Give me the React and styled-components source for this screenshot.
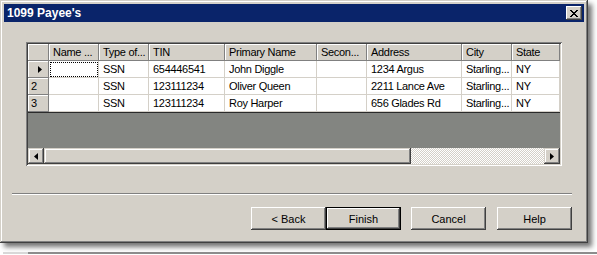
import React from "react";
import styled, { createGlobalStyle } from "styled-components";

const GlobalStyle = createGlobalStyle`
  html, body {
    margin: 0;
    padding: 0;
    background: #ffffff;
  }
  body {
    font-family: "Liberation Sans", Arial, sans-serif;
    font-size: 11px;
    color: #000;
  }
`;

const Page = styled.div`
  width: 597px;
  height: 255px;
  overflow: hidden;
`;

const Window = styled.div`
  width: 588px;
  height: 243px;
  box-sizing: border-box;
  background: #d4d0c8;
  padding: 2px;
  display: flex;
  flex-direction: column;
  box-shadow: inset -1px -1px #404040, inset 1px 1px #d4d0c8,
    inset -2px -2px #808080, inset 2px 2px #ffffff,
    4px 4px 5px rgba(0, 0, 0, 0.55);
`;

const TitleBar = styled.div`
  height: 18px;
  margin: 2px 2px 0 2px;
  background: #0a246a;
  display: flex;
  align-items: center;
  justify-content: space-between;
  padding: 0 2px 0 3px;
`;

const TitleText = styled.div`
  color: #fff;
  font-weight: bold;
  font-size: 12px;
  letter-spacing: 0;
`;

const CloseButton = styled.div`
  width: 16px;
  height: 14px;
  box-sizing: border-box;
  background: #d4d0c8;
  display: flex;
  align-items: center;
  justify-content: center;
  box-shadow: inset -1px -1px #404040, inset 1px 1px #ffffff,
    inset -2px -2px #808080, inset 2px 2px #d4d0c8;
`;

const Content = styled.div`
  padding: 20px 0 0 10px;
  display: flex;
  flex-direction: column;
`;

const Grid = styled.div`
  margin-left: 14px;
  width: 536px;
  height: 124px;
  box-sizing: border-box;
  padding: 2px;
  background: #808080;
  display: flex;
  flex-direction: column;
  box-shadow: inset 1px 1px #808080, inset -1px -1px #ffffff,
    inset 2px 2px #404040, inset -2px -2px #d4d0c8;
  letter-spacing: -0.3px;
`;

const Row = styled.div`
  display: grid;
  grid-template-columns: 21px 50px 50px 76px 92px 50px 95px 50px 48px;
  height: 17px;
  background: #fff;
`;

const HeadCell = styled.div`
  background: #d4d0c8;
  box-sizing: border-box;
  border-right: 1px solid #808080;
  border-bottom: 1px solid #808080;
  box-shadow: inset 1px 1px #ffffff;
  padding-left: 4px;
  line-height: 16px;
  white-space: nowrap;
  overflow: hidden;
`;

const RowHead = styled.div`
  background: #d4d0c8;
  box-sizing: border-box;
  border-right: 1px solid #808080;
  border-bottom: 1px solid #808080;
  box-shadow: inset 1px 1px #ffffff;
  padding-left: 3px;
  line-height: 16px;
  display: flex;
  align-items: center;
  justify-content: ${({ $arrow }) => ($arrow ? "center" : "flex-start")};
`;

const Cell = styled.div`
  box-sizing: border-box;
  border-right: 1px solid #d4d0c8;
  border-bottom: 1px solid #d4d0c8;
  padding-left: 4px;
  line-height: 16px;
  white-space: nowrap;
  overflow: hidden;
  outline: ${({ $focus }) => ($focus ? "1px dotted #000" : "none")};
  outline-offset: -2px;
`;

const EmptyArea = styled.div`
  flex: 1;
  background: #838581;
  border-top: 1px solid #2a2a2a;
`;

const ScrollBar = styled.div`
  height: 16px;
  display: flex;
  background: #d4d0c8;
`;

const ScrollButton = styled.div`
  width: 16px;
  height: 16px;
  box-sizing: border-box;
  background: #d4d0c8;
  display: flex;
  align-items: center;
  justify-content: center;
  box-shadow: inset -1px -1px #404040, inset 1px 1px #d4d0c8,
    inset -2px -2px #808080, inset 2px 2px #ffffff;
`;

const Thumb = styled.div`
  width: 367px;
  height: 16px;
  box-sizing: border-box;
  background: #d4d0c8;
  box-shadow: inset -1px -1px #404040, inset 1px 1px #d4d0c8,
    inset -2px -2px #808080, inset 2px 2px #ffffff;
`;

const Track = styled.div`
  flex: 1;
  background: repeating-conic-gradient(#ffffff 0 25%, #d4d0c8 0 50%) 0 0 / 2px 2px;
`;

const Separator = styled.div`
  margin-top: 27px;
  width: 560px;
  height: 1px;
  background: #808080;
  border-bottom: 1px solid #ffffff;
`;

const ButtonRow = styled.div`
  margin-top: 12px;
  width: 560px;
  display: flex;
  justify-content: flex-end;
`;

const Button = styled.div`
  width: 75px;
  height: 23px;
  box-sizing: border-box;
  margin-left: ${({ $ml }) => $ml || 0}px;
  background: #d4d0c8;
  display: flex;
  align-items: center;
  justify-content: center;
  font-size: 11px;
  border: ${({ $default }) => ($default ? "1px solid #000" : "none")};
  box-shadow: inset -1px -1px #404040, inset 1px 1px #ffffff,
    inset -2px -2px #808080, inset 2px 2px #d4d0c8;
`;

const Strip = styled.div`
  margin-top: 9px;
  height: 2px;
  display: flex;
`;

const StripPart = styled.div`
  width: ${({ $w }) => $w};
  flex: ${({ $w }) => ($w ? "none" : 1)};
  margin-left: ${({ $ml }) => $ml || 0}px;
  background: ${({ $c }) => $c};
`;

const LeftArrow = () => (
  <svg width="4" height="7" viewBox="0 0 4 7">
    <path d="M4 0 L0 3.5 L4 7 Z" fill="#000" />
  </svg>
);

const RightArrow = () => (
  <svg width="4" height="7" viewBox="0 0 4 7">
    <path d="M0 0 L4 3.5 L0 7 Z" fill="#000" />
  </svg>
);

const CloseGlyph = () => (
  <svg width="8" height="7" viewBox="0 0 8 7" shapeRendering="crispEdges">
    <path
      d="M0 0h2v1h1v1h2v-1h1v-1h2v1h-1v1h-1v1h-1v1h1v1h1v1h1v1h-2v-1h-1v-1h-2v1h-1v1h-2v-1h1v-1h1v-1h1v-1h-1v-1h-1v-1h-1z"
      fill="#000"
    />
  </svg>
);

const headers = ["Name ...", "Type of...", "TIN", "Primary Name", "Secon...", "Address", "City", "State"];

const rows = [
  ["", "SSN", "654446541", "John Diggle", "", "1234 Argus", "Starling...", "NY"],
  ["", "SSN", "123111234", "Oliver Queen", "", "2211 Lance Ave", "Starling...", "NY"],
  ["", "SSN", "123111234", "Roy Harper", "", "656 Glades Rd", "Starling...", "NY"],
];

export default function App() {
  return (
    <Page>
      <GlobalStyle />
      <Window>
        <TitleBar>
          <TitleText>1099 Payee's</TitleText>
          <CloseButton>
            <CloseGlyph />
          </CloseButton>
        </TitleBar>
        <Content>
          <Grid>
            <Row>
              <HeadCell />
              {headers.map((h) => (
                <HeadCell key={h}>{h}</HeadCell>
              ))}
            </Row>
            {rows.map((r, i) => (
              <Row key={i}>
                <RowHead $arrow={i === 0}>{i === 0 ? <RightArrow /> : i + 1}</RowHead>
                {r.map((c, j) => (
                  <Cell key={j} $focus={i === 0 && j === 0}>
                    {c}
                  </Cell>
                ))}
              </Row>
            ))}
            <EmptyArea />
            <ScrollBar>
              <ScrollButton>
                <LeftArrow />
              </ScrollButton>
              <Thumb />
              <Track />
              <ScrollButton>
                <RightArrow />
              </ScrollButton>
            </ScrollBar>
          </Grid>
          <Separator />
          <ButtonRow>
            <Button>&lt; Back</Button>
            <Button $default>Finish</Button>
            <Button $ml={10}>Cancel</Button>
            <Button $ml={11}>Help</Button>
          </ButtonRow>
        </Content>
      </Window>
      <Strip>
        <StripPart $w="25px" $ml={3} $c="#d8d8d8" />
        <StripPart $c="#8c8c8c" />
      </Strip>
    </Page>
  );
}
